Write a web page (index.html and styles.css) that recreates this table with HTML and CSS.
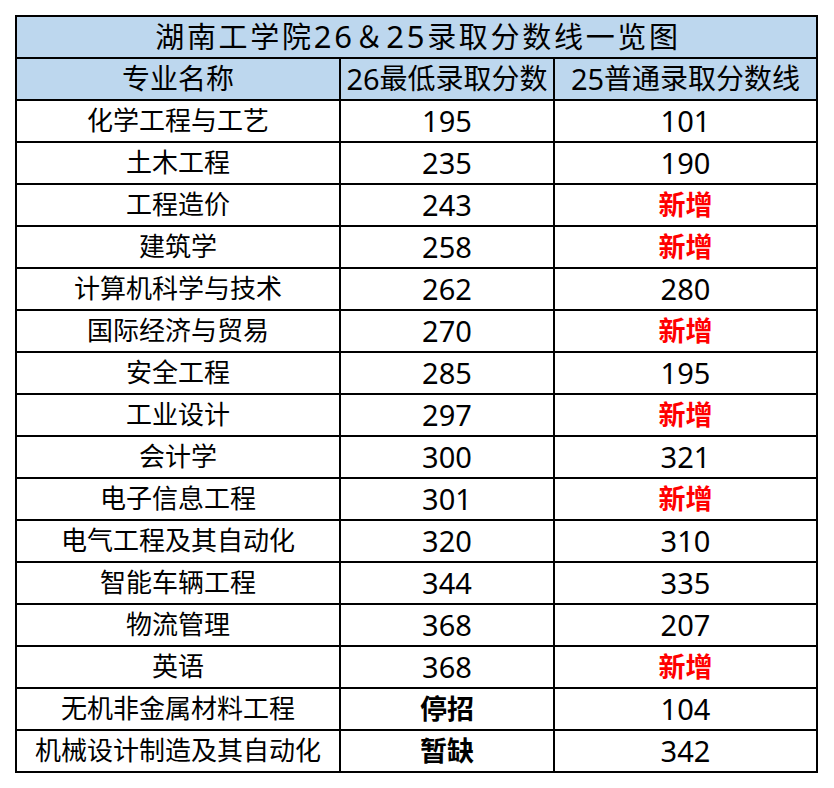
FILE: index.html
```html
<!DOCTYPE html>
<html lang="zh-CN">
<head>
<meta charset="utf-8">
<title>湖南工学院26＆25录取分数线一览图</title>
<link rel="stylesheet" href="styles.css">
</head>
<body>
<div class="sheet">
  <div class="cell title">湖南工学院<span class="td">26</span>＆<span class="td">25</span>录取分数线一览图</div>
  <div class="cell head">专业名称</div>
  <div class="cell head"><span class="d">26</span>最低录取分数</div>
  <div class="cell head"><span class="d">25</span>普通录取分数线</div>

  <div class="cell">化学工程与工艺</div><div class="cell num">195</div><div class="cell num">101</div>
  <div class="cell">土木工程</div><div class="cell num">235</div><div class="cell num">190</div>
  <div class="cell">工程造价</div><div class="cell num">243</div><div class="cell new">新增</div>
  <div class="cell">建筑学</div><div class="cell num">258</div><div class="cell new">新增</div>
  <div class="cell">计算机科学与技术</div><div class="cell num">262</div><div class="cell num">280</div>
  <div class="cell">国际经济与贸易</div><div class="cell num">270</div><div class="cell new">新增</div>
  <div class="cell">安全工程</div><div class="cell num">285</div><div class="cell num">195</div>
  <div class="cell">工业设计</div><div class="cell num">297</div><div class="cell new">新增</div>
  <div class="cell">会计学</div><div class="cell num">300</div><div class="cell num">321</div>
  <div class="cell">电子信息工程</div><div class="cell num">301</div><div class="cell new">新增</div>
  <div class="cell">电气工程及其自动化</div><div class="cell num">320</div><div class="cell num">310</div>
  <div class="cell">智能车辆工程</div><div class="cell num">344</div><div class="cell num">335</div>
  <div class="cell">物流管理</div><div class="cell num">368</div><div class="cell num">207</div>
  <div class="cell">英语</div><div class="cell num">368</div><div class="cell new">新增</div>
  <div class="cell">无机非金属材料工程</div><div class="cell strong">停招</div><div class="cell num">104</div>
  <div class="cell">机械设计制造及其自动化</div><div class="cell strong">暂缺</div><div class="cell num">342</div>
</div>
</body>
</html>
```
FILE: styles.css
```css
html, body {
  margin: 0;
  padding: 0;
  background: #ffffff;
}

body {
  font-family: "Noto Sans", "Noto Sans CJK SC", sans-serif;
  color: #000000;
}

.sheet {
  box-sizing: border-box;
  margin: 15px 0 0 15px;
  width: 803px;
  padding: 2px;
  gap: 2px;
  background: #000000;
  display: grid;
  grid-template-columns: 322px 212px 261px;
  grid-auto-rows: 40px;
}

.cell {
  background: #ffffff;
  display: flex;
  align-items: center;
  justify-content: center;
  font-size: 26px;
  line-height: 1;
  white-space: nowrap;
  padding-bottom: 2px;
  box-sizing: border-box;
}

.title {
  grid-column: 1 / -1;
  background: #bdd7ee;
  font-size: 29px;
  letter-spacing: 2.7px;
  padding-left: 3px;
}

.head {
  background: #bdd7ee;
  font-size: 28px;
}

.td {
  font-size: 31px;
}

.d {
  font-size: 29px;
}

.num {
  font-size: 29px;
}

.new {
  color: #ff0000;
  font-weight: bold;
  font-size: 27px;
}

.strong {
  font-weight: bold;
  font-size: 27px;
}
```
